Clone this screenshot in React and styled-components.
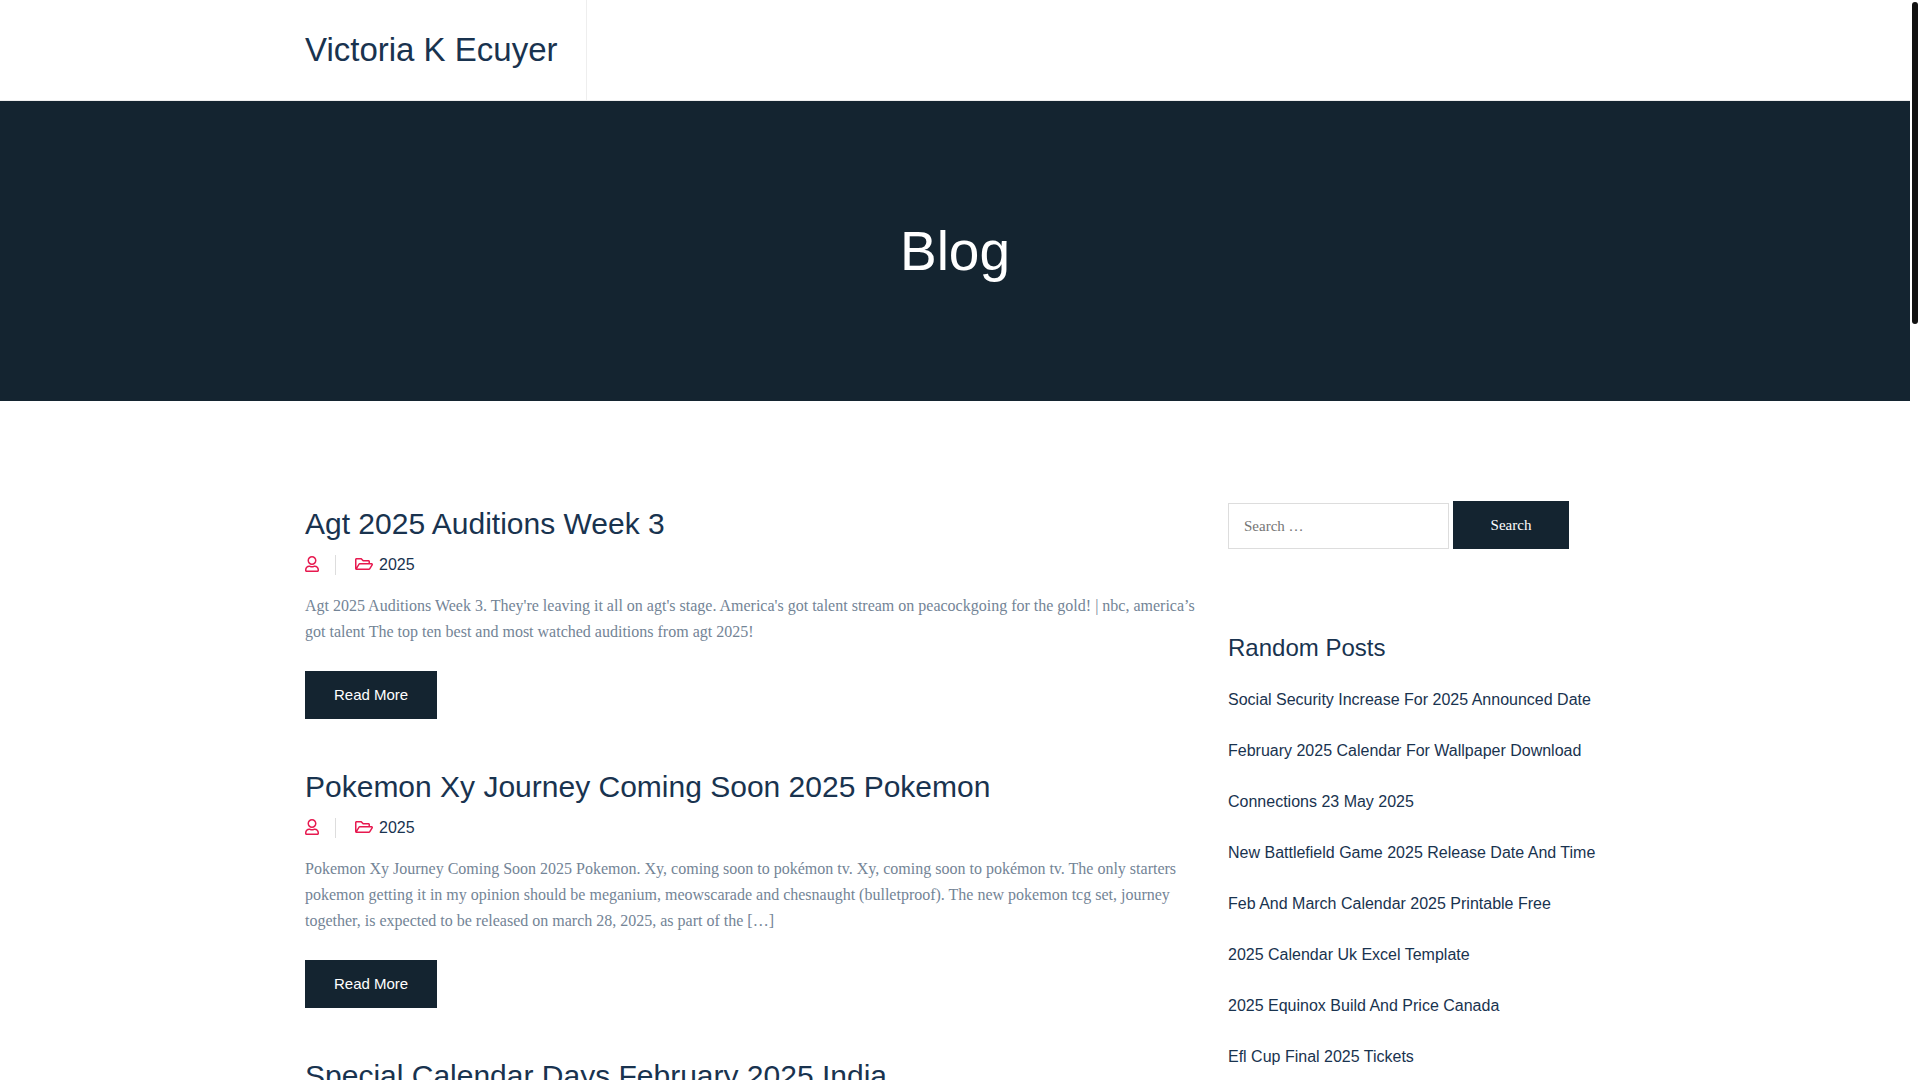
import React from 'react';
import styled, { createGlobalStyle } from 'styled-components';
import { FaRegUser, FaRegFolderOpen } from 'react-icons/fa';

const sans = '"Liberation Sans", Arial, sans-serif';
const serif = '"Liberation Serif", "Times New Roman", serif';

const GlobalStyle = createGlobalStyle`
  * {
    box-sizing: border-box;
  }
  body {
    margin: 0;
    overflow: hidden;
    background: #ffffff;
    color: #738496;
    font-family: ${serif};
    font-size: 16px;
    line-height: 26px;
  }
  a {
    color: #19334f;
    text-decoration: none;
  }
`;

const Page = styled.div`
  height: 100vh;
  padding-right: 10px;
  overflow: hidden;
`;

const ScrollThumb = styled.div`
  position: fixed;
  top: 2px;
  right: 2px;
  width: 6px;
  height: calc(30vh - 2px);
  border-radius: 3px;
  background: #111111;
`;

const Container = styled.div`
  max-width: 1300px;
  margin: 0 auto;
`;

const Header = styled.header`
  border-bottom: 1px solid #eeeeee;
`;

const Logo = styled.a`
  display: inline-block;
  vertical-align: top;
  padding-right: 28px;
  border-right: 1px solid #eeeeee;
  font-family: ${sans};
  font-size: 33px;
  line-height: 100px;
`;

const Hero = styled.section`
  padding: 100px 0;
  background: #142430;
  text-align: center;
  h1 {
    margin: 0;
    color: #ffffff;
    font-family: ${sans};
    font-size: 55px;
    font-weight: 400;
    line-height: 100px;
  }
`;

const Content = styled(Container)`
  display: grid;
  grid-template-columns: minmax(0, 1fr) 377px;
  gap: 30px;
  padding: 100px 0;
`;

const Article = styled.article`
  margin-bottom: 45px;
  p {
    margin: 0 0 26px;
  }
`;

const PostTitle = styled.h2`
  margin: 0 0 6px;
  font-family: ${sans};
  font-size: 30px;
  font-weight: 400;
  line-height: 45px;
`;

const Meta = styled.ul`
  display: flex;
  align-items: center;
  margin: 0 0 15px;
  padding: 0;
  list-style: none;
  font-family: ${sans};
  svg {
    display: block;
    height: 16px;
    margin-bottom: 2px;
    color: #e7194f;
  }
`;

const Author = styled.li`
  display: flex;
  align-items: center;
  height: 20px;
  margin-right: 19px;
  padding-right: 16px;
  border-right: 1px solid #dddddd;
  svg {
    width: 14px;
  }
`;

const Category = styled.li`
  a {
    display: flex;
    align-items: center;
    gap: 6px;
  }
  svg {
    width: 18px;
  }
`;

const ReadMore = styled.a`
  display: inline-block;
  vertical-align: top;
  padding: 0 29px;
  background: #142430;
  color: #ffffff;
  font-family: ${sans};
  font-size: 15px;
  line-height: 48px;
`;

const SearchForm = styled.form`
  display: flex;
  align-items: flex-end;
  gap: 4px;
  margin-bottom: 81px;
`;

const SearchInput = styled.input`
  width: 221px;
  height: 46px;
  padding: 0 15px;
  border: 1px solid #dddddd;
  border-radius: 0;
  font-family: ${serif};
  font-size: 15px;
  &::placeholder {
    color: #757575;
  }
`;

const SearchButton = styled.button`
  width: 116px;
  height: 48px;
  border: 0;
  background: #142430;
  color: #ffffff;
  font-family: ${serif};
  font-size: 15px;
  cursor: pointer;
`;

const WidgetTitle = styled.h3`
  margin: 0 0 21px;
  color: #19334f;
  font-family: ${sans};
  font-size: 24px;
  font-weight: 400;
  line-height: 36px;
`;

const PostList = styled.ul`
  display: flex;
  flex-direction: column;
  gap: 25px;
  margin: 0;
  padding: 0;
  list-style: none;
  font-family: ${sans};
`;

const posts = [
  {
    title: 'Agt 2025 Auditions Week 3',
    text: "Agt 2025 Auditions Week 3. They're leaving it all on agt's stage. America's got talent stream on peacockgoing for the gold! | nbc, america’s got talent The top ten best and most watched auditions from agt 2025!"
  },
  {
    title: 'Pokemon Xy Journey Coming Soon 2025 Pokemon',
    text: 'Pokemon Xy Journey Coming Soon 2025 Pokemon. Xy, coming soon to pokémon tv. Xy, coming soon to pokémon tv. The only starters pokemon getting it in my opinion should be meganium, meowscarade and chesnaught (bulletproof). The new pokemon tcg set, journey together, is expected to be released on march 28, 2025, as part of the […]'
  },
  {
    title: 'Special Calendar Days February 2025 India'
  }
];

const randomPosts = [
  'Social Security Increase For 2025 Announced Date',
  'February 2025 Calendar For Wallpaper Download',
  'Connections 23 May 2025',
  'New Battlefield Game 2025 Release Date And Time',
  'Feb And March Calendar 2025 Printable Free',
  '2025 Calendar Uk Excel Template',
  '2025 Equinox Build And Price Canada',
  'Efl Cup Final 2025 Tickets'
];

const Post = ({ title, text }) => (
  <Article>
    <PostTitle><a href="#post">{title}</a></PostTitle>
    {text && (
      <>
        <Meta>
          <Author><FaRegUser/></Author>
          <Category>
            <a href="#2025"><FaRegFolderOpen/>2025</a>
          </Category>
        </Meta>
        <p>{text}</p>
        <ReadMore href="#post">Read More</ReadMore>
      </>
    )}
  </Article>
);

const App = () => {
  return (
    <>
      <GlobalStyle/>
      <Page>
        <Header>
          <Container>
            <Logo href="#home">Victoria K Ecuyer</Logo>
          </Container>
        </Header>
        <Hero>
          <h1>Blog</h1>
        </Hero>
        <Content>
          <main>
            {posts.map((post) => <Post key={post.title} {...post}/>)}
          </main>
          <aside>
            <SearchForm onSubmit={(e) => e.preventDefault()}>
              <SearchInput type="search" aria-label="Search for:" placeholder="Search …"/>
              <SearchButton type="submit">Search</SearchButton>
            </SearchForm>
            <WidgetTitle>Random Posts</WidgetTitle>
            <PostList>
              {randomPosts.map((title) => (
                <li key={title}><a href="#post">{title}</a></li>
              ))}
            </PostList>
          </aside>
        </Content>
      </Page>
      <ScrollThumb/>
    </>
  );
};

export default App;
